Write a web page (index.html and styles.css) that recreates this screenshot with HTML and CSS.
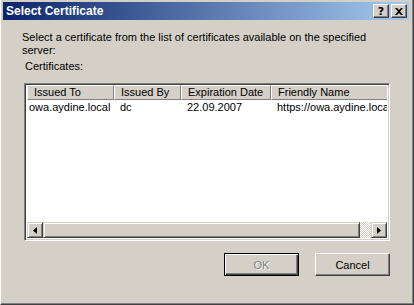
FILE: index.html
```html
<!DOCTYPE html>
<html>
<head>
<meta charset="utf-8">
<link rel="stylesheet" href="styles.css">
</head>
<body>
<div class="window">
  <div class="titlebar">
    <span class="title">Select Certificate</span>
    <div class="tbtns">
      <span class="tbtn">?</span>
      <span class="tbtn x"><svg width="8" height="7" viewBox="0 0 8 7"><path d="M0 0h2l2 2 2-2h2L5 3.5 8 7H6L4 5 2 7H0l3-3.5z" fill="#000"/></svg></span>
    </div>
  </div>
  <div class="content">
    <p class="desc">Select a certificate from the list of certificates available on the specified<br>server:</p>
    <p class="label">Certificates:</p>
    <div class="list">
      <div class="header">
        <div class="col c1">Issued To</div>
        <div class="col c2">Issued By</div>
        <div class="col c3">Expiration Date</div>
        <div class="col c4">Friendly Name</div>
      </div>
      <div class="row">
        <div class="cell c1 first">owa.aydine.local</div>
        <div class="cell c2">dc</div>
        <div class="cell c3">22.09.2007</div>
        <div class="cell c4">https://owa.aydine.local</div>
      </div>
      <div class="spacer"></div>
      <div class="hscroll">
        <div class="sbtn"><svg width="4" height="7" viewBox="0 0 4 7"><path d="M4 0v7L0 3.5z" fill="#000"/></svg></div>
        <div class="thumb"></div>
        <div class="track"></div>
        <div class="sbtn"><svg width="4" height="7" viewBox="0 0 4 7"><path d="M0 0v7l4-3.5z" fill="#000"/></svg></div>
      </div>
    </div>
    <div class="buttons">
      <div class="btn ok"><span>OK</span></div>
      <div class="btn">Cancel</div>
    </div>
  </div>
</div>
</body>
</html>
```
FILE: styles.css
```css
* { box-sizing: border-box; }
html, body { margin: 0; padding: 0; }
body {
  width: 414px; height: 305px; overflow: hidden;
  font-family: "Liberation Sans", Arial, sans-serif;
  font-size: 11px;
  background: #d4d0c8;
}
.window {
  width: 414px; height: 305px;
  background: #d4d0c8;
  border-left: 1px solid #ffffff;
  border-right: 1px solid #404040;
  border-bottom: 1px solid #404040;
  box-shadow: inset -1px -1px 0 #808080;
  padding: 2px 4px 0 2px;
  display: flex; flex-direction: column;
}
.titlebar {
  height: 18px; flex: none;
  background: linear-gradient(to right, #0a246a, #a6caf0);
  display: flex; align-items: center; justify-content: space-between;
  padding: 0 2px 0 3px;
}
.title { color: #fff; font-weight: bold; font-size: 12px; }
.tbtns { display: flex; gap: 2px; }
.tbtn {
  width: 16px; height: 14px; background: #d4d0c8;
  border-top: 1px solid #fff; border-left: 1px solid #fff;
  border-right: 1px solid #404040; border-bottom: 1px solid #404040;
  box-shadow: inset -1px -1px 0 #808080;
  display: flex; align-items: center; justify-content: center;
  font-weight: bold; font-size: 11px; line-height: 1; color: #000;
  font-family: "DejaVu Sans", sans-serif;
}
.content { padding: 0 0 0 19px; display: flex; flex-direction: column; }
.desc { margin: 11px 0 0 0; line-height: 13px; font-size: 11px; white-space: nowrap; }
.label { margin: 3px 0 0 3px; line-height: 13px; font-size: 11px; }
.list {
  margin: 10px 0 0 2px;
  width: 366px; height: 158px; flex: none;
  background: #fff;
  border-top: 1px solid #808080; border-left: 1px solid #808080;
  border-right: 1px solid #fff; border-bottom: 1px solid #fff;
  box-shadow: inset 1px 1px 0 #404040, inset -1px -1px 0 #d4d0c8;
  padding: 1px 2px 2px 2px;
  display: flex; flex-direction: column; overflow: hidden;
  font-size: 11px;
}
.header { display: flex; height: 15px; flex: none; }
.col {
  background: #d4d0c8; height: 15px; line-height: 13px;
  border-top: 1px solid #fff; border-left: 1px solid #fff;
  border-right: 1px solid #808080; border-bottom: 1px solid #808080;
  box-shadow: 1px 0 0 #404040;
  padding-left: 6px; white-space: nowrap; overflow: hidden;
}
.c1 { width: 87px; flex: none; }
.c2 { width: 67px; flex: none; }
.c3 { width: 90px; flex: none; }
.c4 { flex: 1; min-width: 0; }
.col.c4 { border-right: none; box-shadow: none; }
.row { display: flex; height: 15px; line-height: 15px; flex: none; }
.cell { padding-left: 6px; white-space: nowrap; overflow: hidden; }
.cell.first { padding-left: 2px; }
.spacer { flex: 1; }
.hscroll { display: flex; height: 16px; flex: none; }
.sbtn {
  width: 16px; height: 16px; background: #d4d0c8; flex: none;
  border-top: 1px solid #d4d0c8; border-left: 1px solid #d4d0c8;
  border-right: 1px solid #404040; border-bottom: 1px solid #404040;
  box-shadow: inset 1px 1px 0 #fff, inset -1px -1px 0 #808080;
  display: flex; align-items: center; justify-content: center;
}
.thumb {
  width: 317px; flex: none; background: #d4d0c8;
  border-top: 1px solid #d4d0c8; border-left: 1px solid #d4d0c8;
  border-right: 1px solid #404040; border-bottom: 1px solid #404040;
  box-shadow: inset 1px 1px 0 #fff, inset -1px -1px 0 #808080;
}
.track {
  flex: 1;
  background-color: #fff;
  background-image: repeating-conic-gradient(#d4d0c8 0 25%, #fff 0 50%);
  background-size: 2px 2px;
}
.buttons { display: flex; justify-content: flex-end; gap: 16px; margin: 12px 0 0 0; width: 368px; }
.btn {
  width: 75px; height: 23px; background: #d4d0c8;
  border-top: 1px solid #fff; border-left: 1px solid #fff;
  border-right: 1px solid #404040; border-bottom: 1px solid #404040;
  box-shadow: inset -1px -1px 0 #808080;
  display: flex; align-items: center; justify-content: center;
  font-size: 11px;
}
.btn.ok {
  border: 1px solid #000;
  box-shadow: inset 1px 1px 0 #fff, inset -1px -1px 0 #404040, inset -2px -2px 0 #808080;
  color: #808080;
}
.btn.ok span { text-shadow: 1px 1px 0 #fff; }
```
